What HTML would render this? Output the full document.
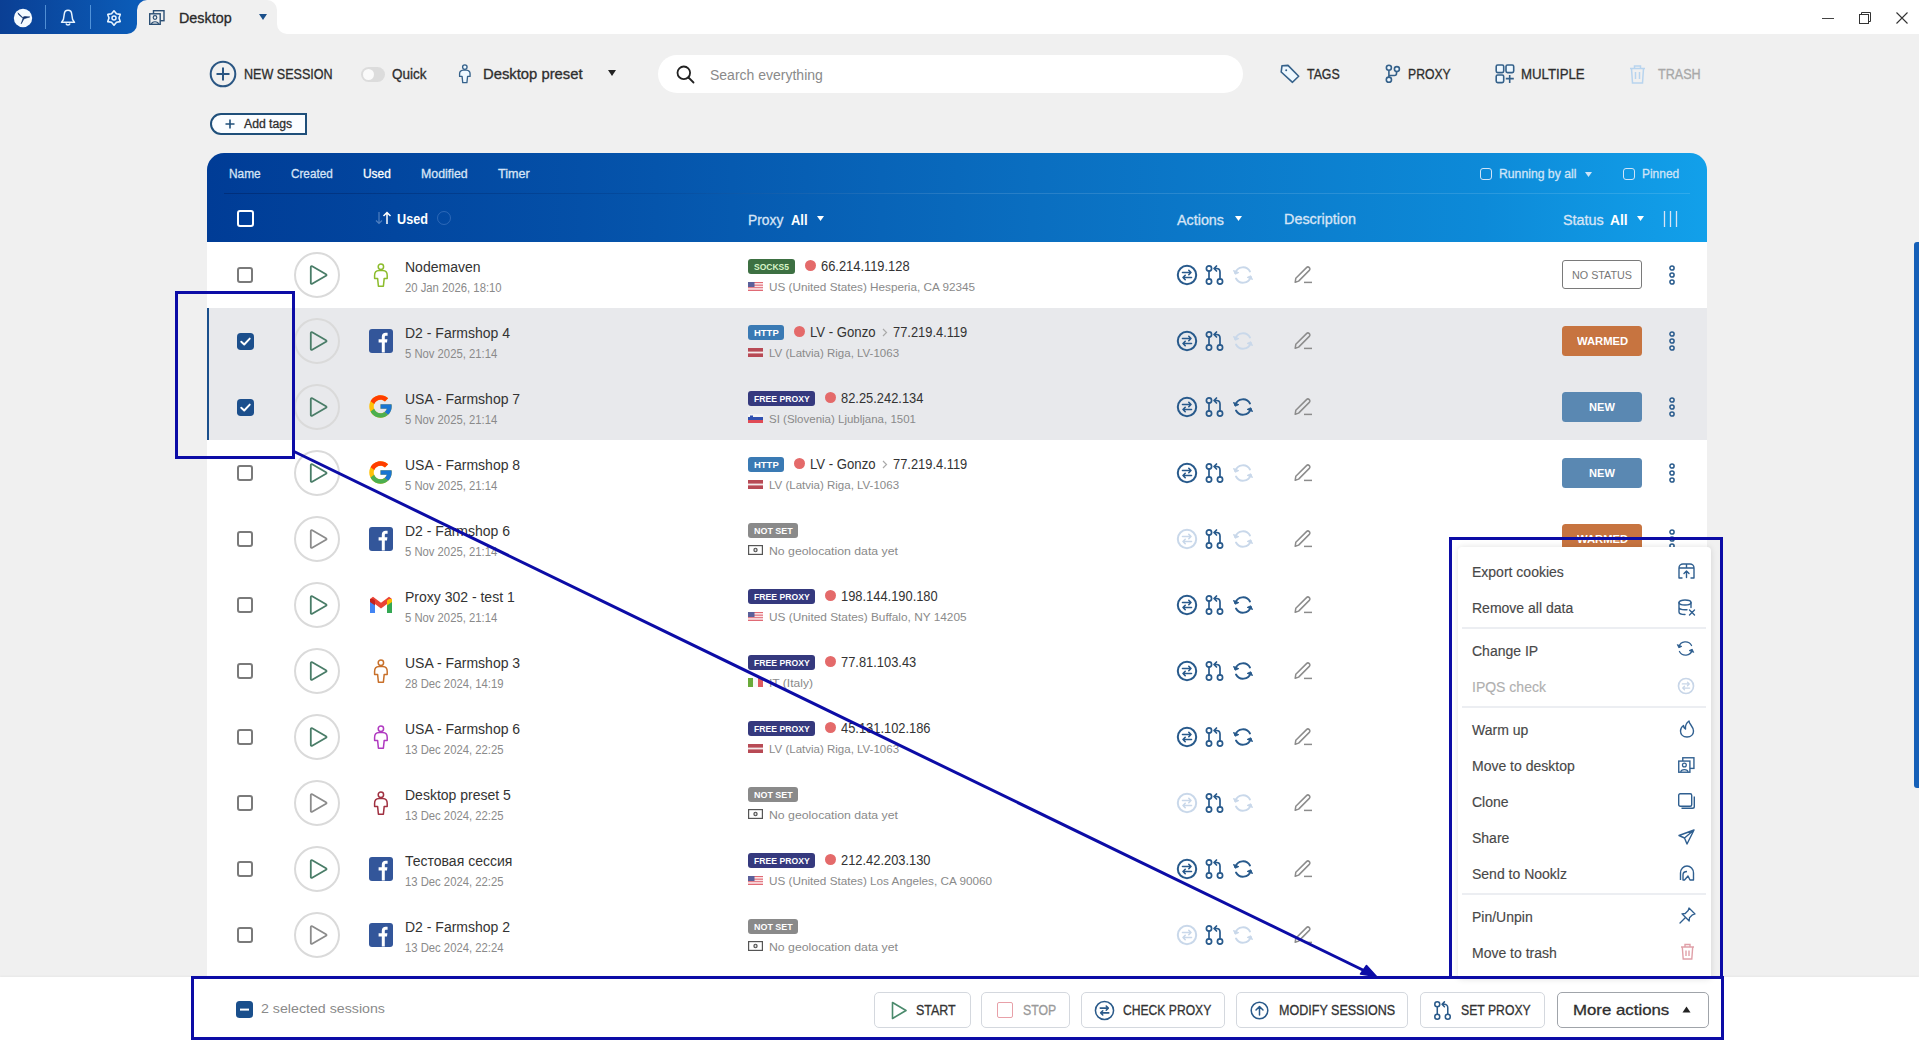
<!DOCTYPE html><html><head><meta charset="utf-8"><style>
*{box-sizing:border-box;margin:0;padding:0}
html,body{width:1919px;height:1041px;overflow:hidden}
body{background:#f0f0f0;font-family:"Liberation Sans",sans-serif;color:#333;position:relative}
.a{position:absolute}
.t{position:absolute;white-space:nowrap;line-height:1}
svg{position:absolute;overflow:visible}
</style></head><body><div class="a" style="left:0;top:0;width:1919px;height:34px;background:#fff"></div>
<div class="a" style="left:0;top:0;width:150px;height:20px;background:#0b5ab8"></div>
<div class="a" style="left:120px;top:14px;width:170px;height:20px;background:#f0f0f0"></div>
<div class="a" style="left:0;top:0;width:137px;height:34px;background:linear-gradient(90deg,#0a3f94,#0b5cb8);border-bottom-right-radius:10px"></div>
<div class="a" style="left:277px;top:0;width:1642px;height:34px;background:#fff;border-bottom-left-radius:10px"></div>
<div class="a" style="left:137px;top:0;width:140px;height:34px;background:#f0f0f0;border-radius:10px 10px 0 0"></div>
<svg style="left:13px;top:8px" width="20" height="20" viewBox="0 0 20 20"><circle cx="10" cy="10" r="9.2" fill="#f4faff"/><path d="M5 4.8 L5.8 6.8 L10 10.3 L8.2 15.8 L11 10.8 L16.8 8.9 L11.6 8.5 L9.6 9.4 Z" fill="#0d2f6a" stroke="#0d2f6a" stroke-width="0.6" stroke-linejoin="round"/></svg>
<div class="a" style="left:45px;top:5px;width:1px;height:24px;background:rgba(140,200,255,.55)"></div>
<div class="a" style="left:90px;top:5px;width:1px;height:24px;background:rgba(140,200,255,.55)"></div>
<svg style="left:60px;top:9px" width="16" height="17" viewBox="0 0 16 17"><path d="M4.3 5 C4.5 2.5 6 1.2 8 1.2 C10 1.2 11.5 2.5 11.7 5 L12.6 10.5 L14.5 13.3 H1.5 L3.4 10.5 Z M6 14.5 C6.3 15.6 7 16 8 16 C9 16 9.7 15.6 10 14.5" stroke="#e8f4ff" stroke-width="1.5" fill="none" stroke-linejoin="round"/></svg>
<svg style="left:104px;top:8px" width="20" height="20" viewBox="0 0 20 20"><path d="M10.00 2.80 L12.50 5.67 L16.24 6.40 L15.00 10.00 L16.24 13.60 L12.50 14.33 L10.00 17.20 L7.50 14.33 L3.76 13.60 L5.00 10.00 L3.76 6.40 L7.50 5.67 Z" stroke="#e8f4ff" stroke-width="1.6" fill="none" stroke-linejoin="round"/><circle cx="10" cy="10" r="2" stroke="#e8f4ff" stroke-width="1.5" fill="none"/></svg>
<svg style="left:149px;top:10px" width="16" height="15" viewBox="0 0 16 15"><rect x="4.5" y="0.7" width="10.5" height="10" stroke="#2b4f74" stroke-width="1.4" fill="none"/><rect x="0.7" y="3.8" width="10.5" height="10.5" stroke="#2b4f74" stroke-width="1.4" fill="#f0f0f0"/><circle cx="6" cy="7.5" r="1.8" stroke="#2b4f74" stroke-width="1.2" fill="none"/><path d="M2.5 14 C3 11 9 11 9.5 14" stroke="#2b4f74" stroke-width="1.2" fill="none"/></svg>
<div class="t" style="left:179px;top:11px;font-size:14px;color:#2a2a2a;-webkit-text-stroke:.3px #2a2a2a;transform:scaleX(1.0255);transform-origin:0 0;">Desktop</div>
<svg style="left:259px;top:14px" width="8" height="7" viewBox="0 0 8 7"><path d="M0 0 H8 L4 6 Z" fill="#1a4f8a"/></svg>
<div class="a" style="left:1822px;top:17.5px;width:12px;height:1.2px;background:#444"></div>
<svg style="left:1859px;top:12px" width="12" height="12" viewBox="0 0 12 12"><rect x="0.5" y="2.5" width="9" height="9" stroke="#333" fill="none"/><path d="M2.5 2.5 V0.5 H11.5 V9.5 H9.5" stroke="#333" fill="none"/></svg>
<svg style="left:1896px;top:12px" width="12" height="12" viewBox="0 0 12 12"><path d="M0.5 0.5 L11.5 11.5 M11.5 0.5 L0.5 11.5" stroke="#333" stroke-width="1.1"/></svg>
<svg style="left:209px;top:60px" width="28" height="28" viewBox="0 0 28 28"><circle cx="14" cy="14" r="12.3" stroke="#2a5683" stroke-width="2" fill="none"/><path d="M14 7.5 V20.5 M7.5 14 H20.5" stroke="#2a5683" stroke-width="2"/></svg>
<div class="t" style="left:244px;top:67px;font-size:14px;color:#2e2e2e;-webkit-text-stroke:.3px #2e2e2e;transform:scaleX(0.8977);transform-origin:0 0;">NEW SESSION</div>
<div class="a" style="left:361px;top:67px;width:24px;height:15px;border-radius:8px;background:#dcdcdc"></div>
<div class="a" style="left:363px;top:69px;width:11px;height:11px;border-radius:6px;background:#fafafa"></div>
<div class="t" style="left:392px;top:67px;font-size:14px;color:#2e2e2e;-webkit-text-stroke:.3px #2e2e2e;transform:scaleX(0.9647);transform-origin:0 0;">Quick</div>
<svg style="left:458px;top:63px" width="14" height="22" viewBox="0 0 16 25" ><g transform="translate(0.3,0.2) scale(0.95,0.92)"><circle cx="7.9" cy="4.8" r="2.7" stroke="#35618a" stroke-width="1.6" fill="#eef8ff"/><path d="M6 8.6 C3.5 8.8 1.6 10.6 1.6 13.2 V16.4 H4.6 L5.4 24.2 H10.4 L11.2 16.4 H14.2 V13.2 C14.2 10.6 12.3 8.8 9.8 8.6 Z" stroke="#35618a" stroke-width="1.6" fill="#eef8ff" stroke-linejoin="round"/></g></svg>
<div class="t" style="left:483px;top:67px;font-size:14px;color:#2e2e2e;-webkit-text-stroke:.3px #2e2e2e;transform:scaleX(1.0580);transform-origin:0 0;">Desktop preset</div>
<svg style="left:608px;top:70px" width="8" height="7" viewBox="0 0 8 7"><path d="M0 0 H8 L4 6 Z" fill="#222"/></svg>
<div class="a" style="left:658px;top:55px;width:585px;height:38px;border-radius:19px;background:#fff"></div>
<svg style="left:676px;top:65px" width="19" height="19" viewBox="0 0 19 19"><circle cx="7.8" cy="7.8" r="6.3" stroke="#222" stroke-width="1.8" fill="none"/><path d="M12.5 12.5 L17.5 17.5" stroke="#222" stroke-width="1.8" stroke-linecap="round"/></svg>
<div class="t" style="left:710px;top:68px;font-size:14px;color:#8a8a8a">Search everything</div>
<svg style="left:1280px;top:64px" width="20" height="20" viewBox="0 0 20 20"><path d="M1.2 8 L2 1.7 L8 1.4 L18.7 12.2 L12.5 18.3 Z" stroke="#35618a" stroke-width="1.6" fill="#eef8ff" stroke-linejoin="round"/><circle cx="6.2" cy="6.2" r="1" fill="#35618a"/></svg>
<div class="t" style="left:1307px;top:67px;font-size:14px;color:#2e2e2e;-webkit-text-stroke:.3px #2e2e2e;transform:scaleX(0.8824);transform-origin:0 0;">TAGS</div>
<svg style="left:1384px;top:63px" width="17" height="20" viewBox="0 0 17 20"><circle cx="4.9" cy="4.8" r="2.5" stroke="#35618a" stroke-width="1.6" fill="#eef8ff"/><circle cx="12.9" cy="6.1" r="2.5" stroke="#35618a" stroke-width="1.6" fill="#eef8ff"/><circle cx="4.9" cy="16.7" r="2.6" stroke="#35618a" stroke-width="1.6" fill="#eef8ff"/><path d="M4.9 7.3 V14.1 M12.5 8.6 V10.5 C12.5 11.8 11.8 12.5 10.5 12.5 H4.9" stroke="#35618a" stroke-width="1.6" fill="none"/></svg>
<div class="t" style="left:1408px;top:67px;font-size:14px;color:#2e2e2e;-webkit-text-stroke:.3px #2e2e2e;transform:scaleX(0.8722);transform-origin:0 0;">PROXY</div>
<svg style="left:1494px;top:63px" width="22" height="22" viewBox="0 0 22 22"><rect x="2.2" y="2" width="7.5" height="7.6" rx="1.5" stroke="#35618a" stroke-width="1.6" fill="#eef8ff"/><rect x="12" y="2" width="7.7" height="7.6" rx="1.5" stroke="#35618a" stroke-width="1.6" fill="#eef8ff"/><rect x="2.2" y="12" width="7.5" height="7.6" rx="1.5" stroke="#35618a" stroke-width="1.6" fill="#eef8ff"/><path d="M15.7 12 V20 M11.8 15.6 H19.8" stroke="#35618a" stroke-width="1.6"/></svg>
<div class="t" style="left:1521px;top:67px;font-size:14px;color:#2e2e2e;-webkit-text-stroke:.3px #2e2e2e;transform:scaleX(0.9442);transform-origin:0 0;">MULTIPLE</div>
<svg style="left:1629px;top:64px" width="17" height="20" viewBox="0 0 17 20"><path d="M1 4.5 H16 M5.5 4.5 V2 H11.5 V4.5 M2.5 4.5 L3.5 19 H13.5 L14.5 4.5 M6.5 8 V15 M10.5 8 V15" stroke="#b8d4ee" stroke-width="1.5" fill="none"/></svg>
<div class="t" style="left:1658px;top:67px;font-size:14px;color:#a8a8a8;-webkit-text-stroke:.3px #a8a8a8;transform:scaleX(0.9003);transform-origin:0 0;">TRASH</div>
<div class="a" style="left:210px;top:113px;width:97px;height:22px;border:2px solid #1f4f7a;border-radius:11px 0 0 11px;background:#fbfdff"></div>
<svg style="left:225px;top:119px" width="10" height="10" viewBox="0 0 10 10"><path d="M5 0.5 V9.5 M0.5 5 H9.5" stroke="#1f4f7a" stroke-width="1.6"/></svg>
<div class="t" style="left:244px;top:118px;font-size:12px;color:#2e2e2e;-webkit-text-stroke:.3px #2e2e2e;transform:scaleX(1.0168);transform-origin:0 0;">Add tags</div>
<div class="a" style="left:207px;top:153px;width:1500px;height:89px;border-radius:17px 17px 0 0;background:linear-gradient(90deg,#003c96 0%,#0450a8 25%,#0a6ec0 55%,#0d8ad8 85%,#12a0ea 100%)"></div>
<div class="a" style="left:224px;top:193px;width:1466px;height:1px;background:linear-gradient(90deg,rgba(0,30,90,.45),rgba(0,30,90,.15) 30%,rgba(255,255,255,.12) 50%,rgba(255,255,255,.12))"></div>
<div class="t" style="left:229px;top:168px;font-size:12.5px;color:#d6e4f6;-webkit-text-stroke:.3px #d6e4f6;transform:scaleX(0.9503);transform-origin:0 0;">Name</div>
<div class="t" style="left:291px;top:168px;font-size:12.5px;color:#d6e4f6;-webkit-text-stroke:.3px #d6e4f6;transform:scaleX(0.9375);transform-origin:0 0;">Created</div>
<div class="t" style="left:363px;top:168px;font-size:12.5px;color:#ffffff;-webkit-text-stroke:.3px #ffffff;transform:scaleX(0.9516);transform-origin:0 0;">Used</div>
<div class="t" style="left:421px;top:168px;font-size:12.5px;color:#d6e4f6;-webkit-text-stroke:.3px #d6e4f6;transform:scaleX(0.9884);transform-origin:0 0;">Modified</div>
<div class="t" style="left:498px;top:168px;font-size:12.5px;color:#d6e4f6;-webkit-text-stroke:.3px #d6e4f6;transform:scaleX(1.0063);transform-origin:0 0;">Timer</div>
<div class="a" style="left:1480px;top:168px;width:12px;height:12px;border:1.5px solid #cfe4f8;border-radius:3px"></div>
<div class="t" style="left:1499px;top:168px;font-size:12.5px;color:#cfe4f8;-webkit-text-stroke:.3px #cfe4f8;transform:scaleX(0.9767);transform-origin:0 0;">Running by all</div>
<svg style="left:1585px;top:172px" width="7" height="6" viewBox="0 0 7 6"><path d="M0 0 H7 L3.5 5 Z" fill="#cfe4f8"/></svg>
<div class="a" style="left:1623px;top:168px;width:12px;height:12px;border:1.5px solid #cfe4f8;border-radius:3px"></div>
<div class="t" style="left:1642px;top:168px;font-size:12.5px;color:#cfe4f8;-webkit-text-stroke:.3px #cfe4f8;transform:scaleX(0.9547);transform-origin:0 0;">Pinned</div>
<div class="a" style="left:237px;top:210px;width:17px;height:17px;border:2px solid #fff;border-radius:3px"></div>
<svg style="left:375px;top:211px" width="17" height="14" viewBox="0 0 17 14"><path d="M4 1 V12.5 M1 9.5 L4 12.5 L7 9.5" stroke="#4f7fc0" stroke-width="1.2" fill="none"/><path d="M12 13 V1.5 M8.5 5 L12 1.5 L15.5 5" stroke="#fff" stroke-width="1.5" fill="none"/></svg>
<div class="t" style="left:397px;top:212px;font-size:14px;color:#fff;font-weight:bold;transform:scaleX(0.9038);transform-origin:0 0;">Used</div>
<div class="a" style="left:437px;top:211px;width:14px;height:14px;border:1.5px solid rgba(120,160,220,.35);border-radius:50%"></div>
<div class="t" style="left:748px;top:213px;font-size:14px;color:#d6e4f6;-webkit-text-stroke:.3px #d6e4f6;transform:scaleX(0.9878);transform-origin:0 0;">Proxy</div>
<div class="t" style="left:791px;top:213px;font-size:14px;color:#fff;font-weight:bold;transform:scaleX(0.9263);transform-origin:0 0;">All</div>
<svg style="left:817px;top:216px" width="7" height="6" viewBox="0 0 7 6"><path d="M0 0 H7 L3.5 5 Z" fill="#fff"/></svg>
<div class="t" style="left:1177px;top:213px;font-size:14px;color:#d6e4f6;-webkit-text-stroke:.3px #d6e4f6;transform:scaleX(1.0234);transform-origin:0 0;">Actions</div>
<svg style="left:1235px;top:216px" width="7" height="6" viewBox="0 0 7 6"><path d="M0 0 H7 L3.5 5 Z" fill="#fff"/></svg>
<div class="t" style="left:1284px;top:212px;font-size:14px;color:#d6e4f6;-webkit-text-stroke:.3px #d6e4f6;transform:scaleX(1.0270);transform-origin:0 0;">Description</div>
<div class="t" style="left:1563px;top:213px;font-size:14px;color:#d6e4f6;-webkit-text-stroke:.3px #d6e4f6;transform:scaleX(1.0271);transform-origin:0 0;">Status</div>
<div class="t" style="left:1610px;top:213px;font-size:14px;color:#fff;font-weight:bold;transform:scaleX(0.9821);transform-origin:0 0;">All</div>
<svg style="left:1637px;top:216px" width="7" height="6" viewBox="0 0 7 6"><path d="M0 0 H7 L3.5 5 Z" fill="#fff"/></svg>
<svg style="left:1663px;top:211px" width="15" height="16" viewBox="0 0 15 16"><path d="M1.5 0 V16 M7.5 0 V16 M13.5 0 V16" stroke="#d6e4f6" stroke-width="1.3"/></svg>
<div class="a" style="left:207px;top:242px;width:1500px;height:735px;background:#fff"></div>
<div class="a" style="left:237px;top:267px;width:16px;height:16px;border:2px solid #7a7a7a;border-radius:3px"></div>
<div class="a" style="left:294px;top:252px;width:46px;height:46px;border:2px solid #dadada;border-radius:50%"></div>
<svg style="left:309px;top:264px" width="20" height="22" viewBox="0 0 20 22"><path d="M3.2 2.2 C2.4 1.8 1.8 2.2 1.8 3 V19 C1.8 19.8 2.4 20.2 3.2 19.8 L17 11.8 C17.7 11.4 17.7 10.6 17 10.2 Z" stroke="#4a7d68" stroke-width="1.8" fill="none" stroke-linejoin="round"/></svg>
<svg style="left:373px;top:262px" width="16" height="25" viewBox="0 0 16 25"><circle cx="7.9" cy="4.8" r="2.7" stroke="#8cbc2c" stroke-width="1.5" fill="none"/><path d="M6 8.6 C3.5 8.8 1.6 10.6 1.6 13.2 V16.4 H4.6 L5.4 24.2 H10.4 L11.2 16.4 H14.2 V13.2 C14.2 10.6 12.3 8.8 9.8 8.6 Z" stroke="#8cbc2c" stroke-width="1.5" fill="none" stroke-linejoin="round"/></svg>
<div class="t" style="left:405px;top:260px;font-size:14px;color:#333">Nodemaven</div>
<div class="t" style="left:405px;top:282px;font-size:12px;color:#8a8a8a;transform:scaleX(.94);transform-origin:0 0">20 Jan 2026, 18:10</div>
<div class="a" style="left:748px;top:259px;width:47px;height:15px;border-radius:3px;background:#3d7042"></div>
<div class="t" style="left:754.0px;top:262px;font-size:9.5px;color:#d8f5c8;font-weight:bold;transform:scaleX(0.8964);transform-origin:0 0;">SOCKS5</div>
<div class="a" style="left:805px;top:260px;width:11px;height:11px;border-radius:50%;background:#e46a6a"></div>
<div class="t" style="left:821px;top:259px;font-size:14px;color:#333;transform:scaleX(.92);transform-origin:0 0">66.214.119.128</div>
<svg style="left:748px;top:282px" width="15" height="9" viewBox="0 0 15 9"><rect x="0" y="0.00" width="15" height="1.29" fill="#e06a75"/><rect x="0" y="1.29" width="15" height="1.29" fill="#fbe3e6"/><rect x="0" y="2.57" width="15" height="1.29" fill="#e06a75"/><rect x="0" y="3.86" width="15" height="1.29" fill="#fbe3e6"/><rect x="0" y="5.14" width="15" height="1.29" fill="#e06a75"/><rect x="0" y="6.43" width="15" height="1.29" fill="#fbe3e6"/><rect x="0" y="7.71" width="15" height="1.29" fill="#e06a75"/><rect x="0" y="0" width="6.5" height="5" fill="#5a5f9a"/></svg>
<div class="t" style="left:769px;top:282px;font-size:11.5px;color:#8a8a8a;transform:scaleX(1.0201);transform-origin:0 0;">US (United States) Hesperia, CA 92345</div>
<svg style="left:1176px;top:264px" width="22" height="22" viewBox="0 0 22 22"><circle cx="11" cy="11" r="9.2" stroke="#285a8c" stroke-width="2" fill="none"/><path d="M6.5 8.5 H15 M12.8 6.3 L15 8.5 L12.8 10.7 M15.5 13.5 H7 M9.2 11.3 L7 13.5 L9.2 15.7" stroke="#285a8c" stroke-width="1.6" fill="none" stroke-linecap="round" stroke-linejoin="round"/></svg>
<svg style="left:1204px;top:264px" width="22" height="22" viewBox="0 0 22 22"><circle cx="5" cy="4.5" r="2.6" stroke="#285a8c" stroke-width="1.7" fill="none"/><circle cx="5" cy="17.5" r="2.6" stroke="#285a8c" stroke-width="1.7" fill="none"/><circle cx="16" cy="17.5" r="2.6" stroke="#285a8c" stroke-width="1.7" fill="none"/><path d="M5 7.1 V14.9 M16 14.9 V8 C16 6 14.5 4.5 12.5 4.5 H10.5 M12.5 2 L10 4.5 L12.5 7" stroke="#285a8c" stroke-width="1.7" fill="none" stroke-linecap="round" stroke-linejoin="round"/></svg>
<svg style="left:1232px;top:264px" width="22" height="22" viewBox="0 0 22 22"><path d="M3.3 9 A8 8 0 0 1 18 7.5 M18.7 13 A8 8 0 0 1 4 14.5" stroke="#c9d8ea" stroke-width="1.9" fill="none" stroke-linecap="round"/><path d="M1.5 6.5 L3.3 10.2 L6.8 8.6 Z M20.5 15.5 L18.7 11.8 L15.2 13.4 Z" fill="#c9d8ea" stroke="#c9d8ea" stroke-width="1" stroke-linejoin="round"/></svg>
<svg style="left:1294px;top:266px" width="19" height="18" viewBox="0 0 19 18"><path d="M1.2 16.2 L1.8 12.3 L12.5 1.6 C13.3 0.8 14.5 0.8 15.3 1.6 C16.1 2.4 16.1 3.6 15.3 4.4 L4.6 15.1 Z" stroke="#8c8c8c" stroke-width="1.5" fill="none" stroke-linejoin="round"/><path d="M10 16.4 H18" stroke="#8c8c8c" stroke-width="1.5"/></svg>
<div class="a" style="left:1562px;top:260px;width:80px;height:29px;border:1px solid #7a7a7a;border-radius:3px"></div>
<div class="t" style="left:1572px;top:269.5px;font-size:11px;color:#777;transform:scaleX(0.9793);transform-origin:0 0;">NO STATUS</div>
<svg style="left:1668px;top:264px" width="8" height="22" viewBox="0 0 8 22"><circle cx="4" cy="4" r="2.1" stroke="#285a8c" stroke-width="1.5" fill="none"/><circle cx="4" cy="11" r="2.1" stroke="#285a8c" stroke-width="1.5" fill="none"/><circle cx="4" cy="18" r="2.1" stroke="#285a8c" stroke-width="1.5" fill="none"/></svg>
<div class="a" style="left:207px;top:308px;width:1500px;height:66px;background:#e8e9ec"></div>
<svg style="left:237px;top:333px" width="17" height="17" viewBox="0 0 16 16"><rect width="16" height="16" rx="3.5" fill="#1c4f8c"/><path d="M4 8.2 L6.8 10.8 L12 5.3" stroke="#fff" stroke-width="1.8" fill="none" stroke-linecap="round" stroke-linejoin="round"/></svg>
<div class="a" style="left:294px;top:318px;width:46px;height:46px;border:2px solid #dadada;border-radius:50%"></div>
<svg style="left:309px;top:330px" width="20" height="22" viewBox="0 0 20 22"><path d="M3.2 2.2 C2.4 1.8 1.8 2.2 1.8 3 V19 C1.8 19.8 2.4 20.2 3.2 19.8 L17 11.8 C17.7 11.4 17.7 10.6 17 10.2 Z" stroke="#4a7d68" stroke-width="1.8" fill="none" stroke-linejoin="round"/></svg>
<svg style="left:369px;top:329px" width="24" height="24" viewBox="0 0 24 24"><rect x="0" y="0" width="24" height="24" rx="3" fill="#33569a"/><path d="M12.8 23.5 V13.5 H9.6 V10.2 H12.8 V7.8 C12.8 5 14.3 3.8 16.8 3.8 C17.7 3.8 18.6 3.9 18.6 3.9 V6.8 H17.3 C16 6.8 15.8 7.4 15.8 8.2 V10.2 H18.4 L18 13.5 H15.8 V23.5 Z" fill="#fff"/></svg>
<div class="t" style="left:405px;top:326px;font-size:14px;color:#333">D2 - Farmshop 4</div>
<div class="t" style="left:405px;top:348px;font-size:12px;color:#8a8a8a;transform:scaleX(.94);transform-origin:0 0">5 Nov 2025, 21:14</div>
<div class="a" style="left:748px;top:325px;width:36px;height:15px;border-radius:3px;background:#3a7ab4"></div>
<div class="t" style="left:753.6px;top:328px;font-size:9.5px;color:#ffffff;font-weight:bold;transform:scaleX(0.9962);transform-origin:0 0;">HTTP</div>
<div class="a" style="left:794px;top:326px;width:11px;height:11px;border-radius:50%;background:#e46a6a"></div>
<div class="t" style="left:810px;top:325px;font-size:14px;color:#333;transform:scaleX(.94);transform-origin:0 0">LV - Gonzo</div>
<svg style="left:882px;top:328px" width="6" height="9" viewBox="0 0 6 9"><path d="M1 1 L4.5 4.5 L1 8" stroke="#aaa" stroke-width="1.2" fill="none"/></svg>
<div class="t" style="left:893px;top:325px;font-size:14px;color:#333;transform:scaleX(.92);transform-origin:0 0">77.219.4.119</div>
<svg style="left:748px;top:348px" width="15" height="9" viewBox="0 0 15 9"><rect width="15" height="9" fill="#b84a55"/><rect y="3.6" width="15" height="1.8" fill="#f4eaea"/></svg>
<div class="t" style="left:769px;top:348px;font-size:11.5px;color:#8a8a8a;transform:scaleX(1.0004);transform-origin:0 0;">LV (Latvia) Riga, LV-1063</div>
<svg style="left:1176px;top:330px" width="22" height="22" viewBox="0 0 22 22"><circle cx="11" cy="11" r="9.2" stroke="#285a8c" stroke-width="2" fill="none"/><path d="M6.5 8.5 H15 M12.8 6.3 L15 8.5 L12.8 10.7 M15.5 13.5 H7 M9.2 11.3 L7 13.5 L9.2 15.7" stroke="#285a8c" stroke-width="1.6" fill="none" stroke-linecap="round" stroke-linejoin="round"/></svg>
<svg style="left:1204px;top:330px" width="22" height="22" viewBox="0 0 22 22"><circle cx="5" cy="4.5" r="2.6" stroke="#285a8c" stroke-width="1.7" fill="none"/><circle cx="5" cy="17.5" r="2.6" stroke="#285a8c" stroke-width="1.7" fill="none"/><circle cx="16" cy="17.5" r="2.6" stroke="#285a8c" stroke-width="1.7" fill="none"/><path d="M5 7.1 V14.9 M16 14.9 V8 C16 6 14.5 4.5 12.5 4.5 H10.5 M12.5 2 L10 4.5 L12.5 7" stroke="#285a8c" stroke-width="1.7" fill="none" stroke-linecap="round" stroke-linejoin="round"/></svg>
<svg style="left:1232px;top:330px" width="22" height="22" viewBox="0 0 22 22"><path d="M3.3 9 A8 8 0 0 1 18 7.5 M18.7 13 A8 8 0 0 1 4 14.5" stroke="#c9d8ea" stroke-width="1.9" fill="none" stroke-linecap="round"/><path d="M1.5 6.5 L3.3 10.2 L6.8 8.6 Z M20.5 15.5 L18.7 11.8 L15.2 13.4 Z" fill="#c9d8ea" stroke="#c9d8ea" stroke-width="1" stroke-linejoin="round"/></svg>
<svg style="left:1294px;top:332px" width="19" height="18" viewBox="0 0 19 18"><path d="M1.2 16.2 L1.8 12.3 L12.5 1.6 C13.3 0.8 14.5 0.8 15.3 1.6 C16.1 2.4 16.1 3.6 15.3 4.4 L4.6 15.1 Z" stroke="#8c8c8c" stroke-width="1.5" fill="none" stroke-linejoin="round"/><path d="M10 16.4 H18" stroke="#8c8c8c" stroke-width="1.5"/></svg>
<div class="a" style="left:1562px;top:326px;width:80px;height:29.5px;border-radius:3.5px;background:#c77440"></div>
<div class="t" style="left:1576.7px;top:335.5px;font-size:11px;color:#fff;font-weight:bold;transform:scaleX(1.0227);transform-origin:0 0;">WARMED</div>
<svg style="left:1668px;top:330px" width="8" height="22" viewBox="0 0 8 22"><circle cx="4" cy="4" r="2.1" stroke="#285a8c" stroke-width="1.5" fill="none"/><circle cx="4" cy="11" r="2.1" stroke="#285a8c" stroke-width="1.5" fill="none"/><circle cx="4" cy="18" r="2.1" stroke="#285a8c" stroke-width="1.5" fill="none"/></svg>
<div class="a" style="left:207px;top:374px;width:1500px;height:66px;background:#e8e9ec"></div>
<svg style="left:237px;top:399px" width="17" height="17" viewBox="0 0 16 16"><rect width="16" height="16" rx="3.5" fill="#1c4f8c"/><path d="M4 8.2 L6.8 10.8 L12 5.3" stroke="#fff" stroke-width="1.8" fill="none" stroke-linecap="round" stroke-linejoin="round"/></svg>
<div class="a" style="left:294px;top:384px;width:46px;height:46px;border:2px solid #dadada;border-radius:50%"></div>
<svg style="left:309px;top:396px" width="20" height="22" viewBox="0 0 20 22"><path d="M3.2 2.2 C2.4 1.8 1.8 2.2 1.8 3 V19 C1.8 19.8 2.4 20.2 3.2 19.8 L17 11.8 C17.7 11.4 17.7 10.6 17 10.2 Z" stroke="#4a7d68" stroke-width="1.8" fill="none" stroke-linejoin="round"/></svg>
<svg style="left:367px;top:393px" width="27" height="27" viewBox="0 0 48 48"><path fill="#FFC107" d="M43.6 20.1H42V20H24v8h11.3C33.7 32.7 29.2 36 24 36c-6.6 0-12-5.4-12-12s5.4-12 12-12c3.1 0 5.8 1.2 7.9 3.1l5.7-5.7C34 6.1 29.3 4 24 4 13 4 4 13 4 24s9 20 20 20 20-9 20-20c0-1.3-.1-2.6-.4-3.9z"/><path fill="#FF3D00" d="M6.3 14.7l6.6 4.8C14.7 15.1 19 12 24 12c3.1 0 5.8 1.2 7.9 3.1l5.7-5.7C34 6.1 29.3 4 24 4 16.3 4 9.7 8.3 6.3 14.7z"/><path fill="#4CAF50" d="M24 44c5.2 0 9.9-2 13.4-5.2l-6.2-5.2C29.2 35.1 26.7 36 24 36c-5.2 0-9.6-3.3-11.3-8l-6.5 5C9.5 39.6 16.2 44 24 44z"/><path fill="#1976D2" d="M43.6 20.1H42V20H24v8h11.3c-.8 2.2-2.2 4.2-4.1 5.6l6.2 5.2C37 39.2 44 34 44 24c0-1.3-.1-2.6-.4-3.9z"/></svg>
<div class="t" style="left:405px;top:392px;font-size:14px;color:#333">USA - Farmshop 7</div>
<div class="t" style="left:405px;top:414px;font-size:12px;color:#8a8a8a;transform:scaleX(.94);transform-origin:0 0">5 Nov 2025, 21:14</div>
<div class="a" style="left:748px;top:391px;width:67px;height:15px;border-radius:3px;background:#35397e"></div>
<div class="t" style="left:753.6px;top:394px;font-size:9.5px;color:#ffffff;font-weight:bold;transform:scaleX(0.9090);transform-origin:0 0;">FREE PROXY</div>
<div class="a" style="left:825px;top:392px;width:11px;height:11px;border-radius:50%;background:#e46a6a"></div>
<div class="t" style="left:841px;top:391px;font-size:14px;color:#333;transform:scaleX(.92);transform-origin:0 0">82.25.242.134</div>
<svg style="left:748px;top:414px" width="15" height="9" viewBox="0 0 15 9"><rect width="15" height="3" fill="#f4f4f4"/><rect y="3" width="15" height="3" fill="#3050b0"/><rect y="6" width="15" height="3" fill="#e04a55"/><rect x="2" y="1.5" width="3" height="3.5" fill="#3050b0"/></svg>
<div class="t" style="left:769px;top:414px;font-size:11.5px;color:#8a8a8a;transform:scaleX(0.9994);transform-origin:0 0;">SI (Slovenia) Ljubljana, 1501</div>
<svg style="left:1176px;top:396px" width="22" height="22" viewBox="0 0 22 22"><circle cx="11" cy="11" r="9.2" stroke="#285a8c" stroke-width="2" fill="none"/><path d="M6.5 8.5 H15 M12.8 6.3 L15 8.5 L12.8 10.7 M15.5 13.5 H7 M9.2 11.3 L7 13.5 L9.2 15.7" stroke="#285a8c" stroke-width="1.6" fill="none" stroke-linecap="round" stroke-linejoin="round"/></svg>
<svg style="left:1204px;top:396px" width="22" height="22" viewBox="0 0 22 22"><circle cx="5" cy="4.5" r="2.6" stroke="#285a8c" stroke-width="1.7" fill="none"/><circle cx="5" cy="17.5" r="2.6" stroke="#285a8c" stroke-width="1.7" fill="none"/><circle cx="16" cy="17.5" r="2.6" stroke="#285a8c" stroke-width="1.7" fill="none"/><path d="M5 7.1 V14.9 M16 14.9 V8 C16 6 14.5 4.5 12.5 4.5 H10.5 M12.5 2 L10 4.5 L12.5 7" stroke="#285a8c" stroke-width="1.7" fill="none" stroke-linecap="round" stroke-linejoin="round"/></svg>
<svg style="left:1232px;top:396px" width="22" height="22" viewBox="0 0 22 22"><path d="M3.3 9 A8 8 0 0 1 18 7.5 M18.7 13 A8 8 0 0 1 4 14.5" stroke="#285a8c" stroke-width="1.9" fill="none" stroke-linecap="round"/><path d="M1.5 6.5 L3.3 10.2 L6.8 8.6 Z M20.5 15.5 L18.7 11.8 L15.2 13.4 Z" fill="#285a8c" stroke="#285a8c" stroke-width="1" stroke-linejoin="round"/></svg>
<svg style="left:1294px;top:398px" width="19" height="18" viewBox="0 0 19 18"><path d="M1.2 16.2 L1.8 12.3 L12.5 1.6 C13.3 0.8 14.5 0.8 15.3 1.6 C16.1 2.4 16.1 3.6 15.3 4.4 L4.6 15.1 Z" stroke="#8c8c8c" stroke-width="1.5" fill="none" stroke-linejoin="round"/><path d="M10 16.4 H18" stroke="#8c8c8c" stroke-width="1.5"/></svg>
<div class="a" style="left:1562px;top:392px;width:80px;height:29.5px;border-radius:3.5px;background:#5a88b2"></div>
<div class="t" style="left:1588.8px;top:401.5px;font-size:11px;color:#fff;font-weight:bold;transform:scaleX(1.0062);transform-origin:0 0;">NEW</div>
<svg style="left:1668px;top:396px" width="8" height="22" viewBox="0 0 8 22"><circle cx="4" cy="4" r="2.1" stroke="#285a8c" stroke-width="1.5" fill="none"/><circle cx="4" cy="11" r="2.1" stroke="#285a8c" stroke-width="1.5" fill="none"/><circle cx="4" cy="18" r="2.1" stroke="#285a8c" stroke-width="1.5" fill="none"/></svg>
<div class="a" style="left:237px;top:465px;width:16px;height:16px;border:2px solid #7a7a7a;border-radius:3px"></div>
<div class="a" style="left:294px;top:450px;width:46px;height:46px;border:2px solid #dadada;border-radius:50%"></div>
<svg style="left:309px;top:462px" width="20" height="22" viewBox="0 0 20 22"><path d="M3.2 2.2 C2.4 1.8 1.8 2.2 1.8 3 V19 C1.8 19.8 2.4 20.2 3.2 19.8 L17 11.8 C17.7 11.4 17.7 10.6 17 10.2 Z" stroke="#4a7d68" stroke-width="1.8" fill="none" stroke-linejoin="round"/></svg>
<svg style="left:367px;top:459px" width="27" height="27" viewBox="0 0 48 48"><path fill="#FFC107" d="M43.6 20.1H42V20H24v8h11.3C33.7 32.7 29.2 36 24 36c-6.6 0-12-5.4-12-12s5.4-12 12-12c3.1 0 5.8 1.2 7.9 3.1l5.7-5.7C34 6.1 29.3 4 24 4 13 4 4 13 4 24s9 20 20 20 20-9 20-20c0-1.3-.1-2.6-.4-3.9z"/><path fill="#FF3D00" d="M6.3 14.7l6.6 4.8C14.7 15.1 19 12 24 12c3.1 0 5.8 1.2 7.9 3.1l5.7-5.7C34 6.1 29.3 4 24 4 16.3 4 9.7 8.3 6.3 14.7z"/><path fill="#4CAF50" d="M24 44c5.2 0 9.9-2 13.4-5.2l-6.2-5.2C29.2 35.1 26.7 36 24 36c-5.2 0-9.6-3.3-11.3-8l-6.5 5C9.5 39.6 16.2 44 24 44z"/><path fill="#1976D2" d="M43.6 20.1H42V20H24v8h11.3c-.8 2.2-2.2 4.2-4.1 5.6l6.2 5.2C37 39.2 44 34 44 24c0-1.3-.1-2.6-.4-3.9z"/></svg>
<div class="t" style="left:405px;top:458px;font-size:14px;color:#333">USA - Farmshop 8</div>
<div class="t" style="left:405px;top:480px;font-size:12px;color:#8a8a8a;transform:scaleX(.94);transform-origin:0 0">5 Nov 2025, 21:14</div>
<div class="a" style="left:748px;top:457px;width:36px;height:15px;border-radius:3px;background:#3a7ab4"></div>
<div class="t" style="left:753.6px;top:460px;font-size:9.5px;color:#ffffff;font-weight:bold;transform:scaleX(0.9962);transform-origin:0 0;">HTTP</div>
<div class="a" style="left:794px;top:458px;width:11px;height:11px;border-radius:50%;background:#e46a6a"></div>
<div class="t" style="left:810px;top:457px;font-size:14px;color:#333;transform:scaleX(.94);transform-origin:0 0">LV - Gonzo</div>
<svg style="left:882px;top:460px" width="6" height="9" viewBox="0 0 6 9"><path d="M1 1 L4.5 4.5 L1 8" stroke="#aaa" stroke-width="1.2" fill="none"/></svg>
<div class="t" style="left:893px;top:457px;font-size:14px;color:#333;transform:scaleX(.92);transform-origin:0 0">77.219.4.119</div>
<svg style="left:748px;top:480px" width="15" height="9" viewBox="0 0 15 9"><rect width="15" height="9" fill="#b84a55"/><rect y="3.6" width="15" height="1.8" fill="#f4eaea"/></svg>
<div class="t" style="left:769px;top:480px;font-size:11.5px;color:#8a8a8a;transform:scaleX(1.0004);transform-origin:0 0;">LV (Latvia) Riga, LV-1063</div>
<svg style="left:1176px;top:462px" width="22" height="22" viewBox="0 0 22 22"><circle cx="11" cy="11" r="9.2" stroke="#285a8c" stroke-width="2" fill="none"/><path d="M6.5 8.5 H15 M12.8 6.3 L15 8.5 L12.8 10.7 M15.5 13.5 H7 M9.2 11.3 L7 13.5 L9.2 15.7" stroke="#285a8c" stroke-width="1.6" fill="none" stroke-linecap="round" stroke-linejoin="round"/></svg>
<svg style="left:1204px;top:462px" width="22" height="22" viewBox="0 0 22 22"><circle cx="5" cy="4.5" r="2.6" stroke="#285a8c" stroke-width="1.7" fill="none"/><circle cx="5" cy="17.5" r="2.6" stroke="#285a8c" stroke-width="1.7" fill="none"/><circle cx="16" cy="17.5" r="2.6" stroke="#285a8c" stroke-width="1.7" fill="none"/><path d="M5 7.1 V14.9 M16 14.9 V8 C16 6 14.5 4.5 12.5 4.5 H10.5 M12.5 2 L10 4.5 L12.5 7" stroke="#285a8c" stroke-width="1.7" fill="none" stroke-linecap="round" stroke-linejoin="round"/></svg>
<svg style="left:1232px;top:462px" width="22" height="22" viewBox="0 0 22 22"><path d="M3.3 9 A8 8 0 0 1 18 7.5 M18.7 13 A8 8 0 0 1 4 14.5" stroke="#c9d8ea" stroke-width="1.9" fill="none" stroke-linecap="round"/><path d="M1.5 6.5 L3.3 10.2 L6.8 8.6 Z M20.5 15.5 L18.7 11.8 L15.2 13.4 Z" fill="#c9d8ea" stroke="#c9d8ea" stroke-width="1" stroke-linejoin="round"/></svg>
<svg style="left:1294px;top:464px" width="19" height="18" viewBox="0 0 19 18"><path d="M1.2 16.2 L1.8 12.3 L12.5 1.6 C13.3 0.8 14.5 0.8 15.3 1.6 C16.1 2.4 16.1 3.6 15.3 4.4 L4.6 15.1 Z" stroke="#8c8c8c" stroke-width="1.5" fill="none" stroke-linejoin="round"/><path d="M10 16.4 H18" stroke="#8c8c8c" stroke-width="1.5"/></svg>
<div class="a" style="left:1562px;top:458px;width:80px;height:29.5px;border-radius:3.5px;background:#5a88b2"></div>
<div class="t" style="left:1588.8px;top:467.5px;font-size:11px;color:#fff;font-weight:bold;transform:scaleX(1.0062);transform-origin:0 0;">NEW</div>
<svg style="left:1668px;top:462px" width="8" height="22" viewBox="0 0 8 22"><circle cx="4" cy="4" r="2.1" stroke="#285a8c" stroke-width="1.5" fill="none"/><circle cx="4" cy="11" r="2.1" stroke="#285a8c" stroke-width="1.5" fill="none"/><circle cx="4" cy="18" r="2.1" stroke="#285a8c" stroke-width="1.5" fill="none"/></svg>
<div class="a" style="left:237px;top:531px;width:16px;height:16px;border:2px solid #7a7a7a;border-radius:3px"></div>
<div class="a" style="left:294px;top:516px;width:46px;height:46px;border:2px solid #dadada;border-radius:50%"></div>
<svg style="left:309px;top:528px" width="20" height="22" viewBox="0 0 20 22"><path d="M3.2 2.2 C2.4 1.8 1.8 2.2 1.8 3 V19 C1.8 19.8 2.4 20.2 3.2 19.8 L17 11.8 C17.7 11.4 17.7 10.6 17 10.2 Z" stroke="#8c8c8c" stroke-width="1.8" fill="none" stroke-linejoin="round"/></svg>
<svg style="left:369px;top:527px" width="24" height="24" viewBox="0 0 24 24"><rect x="0" y="0" width="24" height="24" rx="3" fill="#33569a"/><path d="M12.8 23.5 V13.5 H9.6 V10.2 H12.8 V7.8 C12.8 5 14.3 3.8 16.8 3.8 C17.7 3.8 18.6 3.9 18.6 3.9 V6.8 H17.3 C16 6.8 15.8 7.4 15.8 8.2 V10.2 H18.4 L18 13.5 H15.8 V23.5 Z" fill="#fff"/></svg>
<div class="t" style="left:405px;top:524px;font-size:14px;color:#333">D2 - Farmshop 6</div>
<div class="t" style="left:405px;top:546px;font-size:12px;color:#8a8a8a;transform:scaleX(.94);transform-origin:0 0">5 Nov 2025, 21:14</div>
<div class="a" style="left:748px;top:523px;width:50px;height:15px;border-radius:3px;background:#8a8a8a"></div>
<div class="t" style="left:753.6px;top:526px;font-size:9.5px;color:#ffffff;font-weight:bold;transform:scaleX(0.9408);transform-origin:0 0;">NOT SET</div>
<svg style="left:748px;top:545px" width="15" height="10" viewBox="0 0 15 10"><rect x="0.6" y="0.6" width="13.8" height="8.8" stroke="#555" stroke-width="1.2" fill="none"/><circle cx="7.5" cy="5" r="2.2" fill="#555"/><path d="M7.5 3.8 V6.2 M6.3 5 H8.7" stroke="#fff" stroke-width=".7"/></svg>
<div class="t" style="left:769px;top:546px;font-size:11.5px;color:#8a8a8a;transform:scaleX(1.0673);transform-origin:0 0;">No geolocation data yet</div>
<svg style="left:1176px;top:528px" width="22" height="22" viewBox="0 0 22 22"><circle cx="11" cy="11" r="9.2" stroke="#c9d8ea" stroke-width="2" fill="none"/><path d="M6.5 8.5 H15 M12.8 6.3 L15 8.5 L12.8 10.7 M15.5 13.5 H7 M9.2 11.3 L7 13.5 L9.2 15.7" stroke="#c9d8ea" stroke-width="1.6" fill="none" stroke-linecap="round" stroke-linejoin="round"/></svg>
<svg style="left:1204px;top:528px" width="22" height="22" viewBox="0 0 22 22"><circle cx="5" cy="4.5" r="2.6" stroke="#285a8c" stroke-width="1.7" fill="none"/><circle cx="5" cy="17.5" r="2.6" stroke="#285a8c" stroke-width="1.7" fill="none"/><circle cx="16" cy="17.5" r="2.6" stroke="#285a8c" stroke-width="1.7" fill="none"/><path d="M5 7.1 V14.9 M16 14.9 V8 C16 6 14.5 4.5 12.5 4.5 H10.5 M12.5 2 L10 4.5 L12.5 7" stroke="#285a8c" stroke-width="1.7" fill="none" stroke-linecap="round" stroke-linejoin="round"/></svg>
<svg style="left:1232px;top:528px" width="22" height="22" viewBox="0 0 22 22"><path d="M3.3 9 A8 8 0 0 1 18 7.5 M18.7 13 A8 8 0 0 1 4 14.5" stroke="#c9d8ea" stroke-width="1.9" fill="none" stroke-linecap="round"/><path d="M1.5 6.5 L3.3 10.2 L6.8 8.6 Z M20.5 15.5 L18.7 11.8 L15.2 13.4 Z" fill="#c9d8ea" stroke="#c9d8ea" stroke-width="1" stroke-linejoin="round"/></svg>
<svg style="left:1294px;top:530px" width="19" height="18" viewBox="0 0 19 18"><path d="M1.2 16.2 L1.8 12.3 L12.5 1.6 C13.3 0.8 14.5 0.8 15.3 1.6 C16.1 2.4 16.1 3.6 15.3 4.4 L4.6 15.1 Z" stroke="#8c8c8c" stroke-width="1.5" fill="none" stroke-linejoin="round"/><path d="M10 16.4 H18" stroke="#8c8c8c" stroke-width="1.5"/></svg>
<div class="a" style="left:1562px;top:524px;width:80px;height:29.5px;border-radius:3.5px;background:#c77440"></div>
<div class="t" style="left:1576.7px;top:533.5px;font-size:11px;color:#fff;font-weight:bold;transform:scaleX(1.0227);transform-origin:0 0;">WARMED</div>
<svg style="left:1668px;top:528px" width="8" height="22" viewBox="0 0 8 22"><circle cx="4" cy="4" r="2.1" stroke="#285a8c" stroke-width="1.5" fill="none"/><circle cx="4" cy="11" r="2.1" stroke="#285a8c" stroke-width="1.5" fill="none"/><circle cx="4" cy="18" r="2.1" stroke="#285a8c" stroke-width="1.5" fill="none"/></svg>
<div class="a" style="left:237px;top:597px;width:16px;height:16px;border:2px solid #7a7a7a;border-radius:3px"></div>
<div class="a" style="left:294px;top:582px;width:46px;height:46px;border:2px solid #dadada;border-radius:50%"></div>
<svg style="left:309px;top:594px" width="20" height="22" viewBox="0 0 20 22"><path d="M3.2 2.2 C2.4 1.8 1.8 2.2 1.8 3 V19 C1.8 19.8 2.4 20.2 3.2 19.8 L17 11.8 C17.7 11.4 17.7 10.6 17 10.2 Z" stroke="#4a7d68" stroke-width="1.8" fill="none" stroke-linejoin="round"/></svg>
<svg style="left:370px;top:596px" width="22" height="17" viewBox="0 0 22 17"><path d="M0 3 L0 17 H5 V8 L11 12.5 L17 8 V17 H22 V3 L19 0.8 L11 6.8 L3 0.8 Z" fill="#ea4335"/><path d="M0 3 V17 H5 V7 Z" fill="#4285f4"/><path d="M17 7 V17 H22 V3 Z" fill="#34a853"/><path d="M22 3 V6 L17 9.5 V4.5 L19 3 Z" fill="#fbbc04"/><path d="M0 3 V6 L5 9.5 V4.5 L3 3 Z" fill="#c5221f"/></svg>
<div class="t" style="left:405px;top:590px;font-size:14px;color:#333">Proxy 302 - test 1</div>
<div class="t" style="left:405px;top:612px;font-size:12px;color:#8a8a8a;transform:scaleX(.94);transform-origin:0 0">5 Nov 2025, 21:14</div>
<div class="a" style="left:748px;top:589px;width:67px;height:15px;border-radius:3px;background:#35397e"></div>
<div class="t" style="left:753.6px;top:592px;font-size:9.5px;color:#ffffff;font-weight:bold;transform:scaleX(0.9090);transform-origin:0 0;">FREE PROXY</div>
<div class="a" style="left:825px;top:590px;width:11px;height:11px;border-radius:50%;background:#e46a6a"></div>
<div class="t" style="left:841px;top:589px;font-size:14px;color:#333;transform:scaleX(.92);transform-origin:0 0">198.144.190.180</div>
<svg style="left:748px;top:612px" width="15" height="9" viewBox="0 0 15 9"><rect x="0" y="0.00" width="15" height="1.29" fill="#e06a75"/><rect x="0" y="1.29" width="15" height="1.29" fill="#fbe3e6"/><rect x="0" y="2.57" width="15" height="1.29" fill="#e06a75"/><rect x="0" y="3.86" width="15" height="1.29" fill="#fbe3e6"/><rect x="0" y="5.14" width="15" height="1.29" fill="#e06a75"/><rect x="0" y="6.43" width="15" height="1.29" fill="#fbe3e6"/><rect x="0" y="7.71" width="15" height="1.29" fill="#e06a75"/><rect x="0" y="0" width="6.5" height="5" fill="#5a5f9a"/></svg>
<div class="t" style="left:769px;top:612px;font-size:11.5px;color:#8a8a8a;transform:scaleX(1.0290);transform-origin:0 0;">US (United States) Buffalo, NY 14205</div>
<svg style="left:1176px;top:594px" width="22" height="22" viewBox="0 0 22 22"><circle cx="11" cy="11" r="9.2" stroke="#285a8c" stroke-width="2" fill="none"/><path d="M6.5 8.5 H15 M12.8 6.3 L15 8.5 L12.8 10.7 M15.5 13.5 H7 M9.2 11.3 L7 13.5 L9.2 15.7" stroke="#285a8c" stroke-width="1.6" fill="none" stroke-linecap="round" stroke-linejoin="round"/></svg>
<svg style="left:1204px;top:594px" width="22" height="22" viewBox="0 0 22 22"><circle cx="5" cy="4.5" r="2.6" stroke="#285a8c" stroke-width="1.7" fill="none"/><circle cx="5" cy="17.5" r="2.6" stroke="#285a8c" stroke-width="1.7" fill="none"/><circle cx="16" cy="17.5" r="2.6" stroke="#285a8c" stroke-width="1.7" fill="none"/><path d="M5 7.1 V14.9 M16 14.9 V8 C16 6 14.5 4.5 12.5 4.5 H10.5 M12.5 2 L10 4.5 L12.5 7" stroke="#285a8c" stroke-width="1.7" fill="none" stroke-linecap="round" stroke-linejoin="round"/></svg>
<svg style="left:1232px;top:594px" width="22" height="22" viewBox="0 0 22 22"><path d="M3.3 9 A8 8 0 0 1 18 7.5 M18.7 13 A8 8 0 0 1 4 14.5" stroke="#285a8c" stroke-width="1.9" fill="none" stroke-linecap="round"/><path d="M1.5 6.5 L3.3 10.2 L6.8 8.6 Z M20.5 15.5 L18.7 11.8 L15.2 13.4 Z" fill="#285a8c" stroke="#285a8c" stroke-width="1" stroke-linejoin="round"/></svg>
<svg style="left:1294px;top:596px" width="19" height="18" viewBox="0 0 19 18"><path d="M1.2 16.2 L1.8 12.3 L12.5 1.6 C13.3 0.8 14.5 0.8 15.3 1.6 C16.1 2.4 16.1 3.6 15.3 4.4 L4.6 15.1 Z" stroke="#8c8c8c" stroke-width="1.5" fill="none" stroke-linejoin="round"/><path d="M10 16.4 H18" stroke="#8c8c8c" stroke-width="1.5"/></svg>
<div class="a" style="left:237px;top:663px;width:16px;height:16px;border:2px solid #7a7a7a;border-radius:3px"></div>
<div class="a" style="left:294px;top:648px;width:46px;height:46px;border:2px solid #dadada;border-radius:50%"></div>
<svg style="left:309px;top:660px" width="20" height="22" viewBox="0 0 20 22"><path d="M3.2 2.2 C2.4 1.8 1.8 2.2 1.8 3 V19 C1.8 19.8 2.4 20.2 3.2 19.8 L17 11.8 C17.7 11.4 17.7 10.6 17 10.2 Z" stroke="#4a7d68" stroke-width="1.8" fill="none" stroke-linejoin="round"/></svg>
<svg style="left:373px;top:658px" width="16" height="25" viewBox="0 0 16 25"><circle cx="7.9" cy="4.8" r="2.7" stroke="#c8702a" stroke-width="1.5" fill="none"/><path d="M6 8.6 C3.5 8.8 1.6 10.6 1.6 13.2 V16.4 H4.6 L5.4 24.2 H10.4 L11.2 16.4 H14.2 V13.2 C14.2 10.6 12.3 8.8 9.8 8.6 Z" stroke="#c8702a" stroke-width="1.5" fill="none" stroke-linejoin="round"/></svg>
<div class="t" style="left:405px;top:656px;font-size:14px;color:#333">USA - Farmshop 3</div>
<div class="t" style="left:405px;top:678px;font-size:12px;color:#8a8a8a;transform:scaleX(.94);transform-origin:0 0">28 Dec 2024, 14:19</div>
<div class="a" style="left:748px;top:655px;width:67px;height:15px;border-radius:3px;background:#35397e"></div>
<div class="t" style="left:753.6px;top:658px;font-size:9.5px;color:#ffffff;font-weight:bold;transform:scaleX(0.9090);transform-origin:0 0;">FREE PROXY</div>
<div class="a" style="left:825px;top:656px;width:11px;height:11px;border-radius:50%;background:#e46a6a"></div>
<div class="t" style="left:841px;top:655px;font-size:14px;color:#333;transform:scaleX(.92);transform-origin:0 0">77.81.103.43</div>
<svg style="left:748px;top:678px" width="15" height="9" viewBox="0 0 15 9"><rect width="5" height="9" fill="#6aaa3a"/><rect x="5" width="5" height="9" fill="#f8f8f8"/><rect x="10" width="5" height="9" fill="#e05a60"/></svg>
<div class="t" style="left:769px;top:678px;font-size:11.5px;color:#8a8a8a;transform:scaleX(1.0482);transform-origin:0 0;">IT (Italy)</div>
<svg style="left:1176px;top:660px" width="22" height="22" viewBox="0 0 22 22"><circle cx="11" cy="11" r="9.2" stroke="#285a8c" stroke-width="2" fill="none"/><path d="M6.5 8.5 H15 M12.8 6.3 L15 8.5 L12.8 10.7 M15.5 13.5 H7 M9.2 11.3 L7 13.5 L9.2 15.7" stroke="#285a8c" stroke-width="1.6" fill="none" stroke-linecap="round" stroke-linejoin="round"/></svg>
<svg style="left:1204px;top:660px" width="22" height="22" viewBox="0 0 22 22"><circle cx="5" cy="4.5" r="2.6" stroke="#285a8c" stroke-width="1.7" fill="none"/><circle cx="5" cy="17.5" r="2.6" stroke="#285a8c" stroke-width="1.7" fill="none"/><circle cx="16" cy="17.5" r="2.6" stroke="#285a8c" stroke-width="1.7" fill="none"/><path d="M5 7.1 V14.9 M16 14.9 V8 C16 6 14.5 4.5 12.5 4.5 H10.5 M12.5 2 L10 4.5 L12.5 7" stroke="#285a8c" stroke-width="1.7" fill="none" stroke-linecap="round" stroke-linejoin="round"/></svg>
<svg style="left:1232px;top:660px" width="22" height="22" viewBox="0 0 22 22"><path d="M3.3 9 A8 8 0 0 1 18 7.5 M18.7 13 A8 8 0 0 1 4 14.5" stroke="#285a8c" stroke-width="1.9" fill="none" stroke-linecap="round"/><path d="M1.5 6.5 L3.3 10.2 L6.8 8.6 Z M20.5 15.5 L18.7 11.8 L15.2 13.4 Z" fill="#285a8c" stroke="#285a8c" stroke-width="1" stroke-linejoin="round"/></svg>
<svg style="left:1294px;top:662px" width="19" height="18" viewBox="0 0 19 18"><path d="M1.2 16.2 L1.8 12.3 L12.5 1.6 C13.3 0.8 14.5 0.8 15.3 1.6 C16.1 2.4 16.1 3.6 15.3 4.4 L4.6 15.1 Z" stroke="#8c8c8c" stroke-width="1.5" fill="none" stroke-linejoin="round"/><path d="M10 16.4 H18" stroke="#8c8c8c" stroke-width="1.5"/></svg>
<div class="a" style="left:237px;top:729px;width:16px;height:16px;border:2px solid #7a7a7a;border-radius:3px"></div>
<div class="a" style="left:294px;top:714px;width:46px;height:46px;border:2px solid #dadada;border-radius:50%"></div>
<svg style="left:309px;top:726px" width="20" height="22" viewBox="0 0 20 22"><path d="M3.2 2.2 C2.4 1.8 1.8 2.2 1.8 3 V19 C1.8 19.8 2.4 20.2 3.2 19.8 L17 11.8 C17.7 11.4 17.7 10.6 17 10.2 Z" stroke="#4a7d68" stroke-width="1.8" fill="none" stroke-linejoin="round"/></svg>
<svg style="left:373px;top:724px" width="16" height="25" viewBox="0 0 16 25"><circle cx="7.9" cy="4.8" r="2.7" stroke="#b03ac0" stroke-width="1.5" fill="none"/><path d="M6 8.6 C3.5 8.8 1.6 10.6 1.6 13.2 V16.4 H4.6 L5.4 24.2 H10.4 L11.2 16.4 H14.2 V13.2 C14.2 10.6 12.3 8.8 9.8 8.6 Z" stroke="#b03ac0" stroke-width="1.5" fill="none" stroke-linejoin="round"/></svg>
<div class="t" style="left:405px;top:722px;font-size:14px;color:#333">USA - Farmshop 6</div>
<div class="t" style="left:405px;top:744px;font-size:12px;color:#8a8a8a;transform:scaleX(.94);transform-origin:0 0">13 Dec 2024, 22:25</div>
<div class="a" style="left:748px;top:721px;width:67px;height:15px;border-radius:3px;background:#35397e"></div>
<div class="t" style="left:753.6px;top:724px;font-size:9.5px;color:#ffffff;font-weight:bold;transform:scaleX(0.9090);transform-origin:0 0;">FREE PROXY</div>
<div class="a" style="left:825px;top:722px;width:11px;height:11px;border-radius:50%;background:#e46a6a"></div>
<div class="t" style="left:841px;top:721px;font-size:14px;color:#333;transform:scaleX(.92);transform-origin:0 0">45.131.102.186</div>
<svg style="left:748px;top:744px" width="15" height="9" viewBox="0 0 15 9"><rect width="15" height="9" fill="#b84a55"/><rect y="3.6" width="15" height="1.8" fill="#f4eaea"/></svg>
<div class="t" style="left:769px;top:744px;font-size:11.5px;color:#8a8a8a;transform:scaleX(1.0004);transform-origin:0 0;">LV (Latvia) Riga, LV-1063</div>
<svg style="left:1176px;top:726px" width="22" height="22" viewBox="0 0 22 22"><circle cx="11" cy="11" r="9.2" stroke="#285a8c" stroke-width="2" fill="none"/><path d="M6.5 8.5 H15 M12.8 6.3 L15 8.5 L12.8 10.7 M15.5 13.5 H7 M9.2 11.3 L7 13.5 L9.2 15.7" stroke="#285a8c" stroke-width="1.6" fill="none" stroke-linecap="round" stroke-linejoin="round"/></svg>
<svg style="left:1204px;top:726px" width="22" height="22" viewBox="0 0 22 22"><circle cx="5" cy="4.5" r="2.6" stroke="#285a8c" stroke-width="1.7" fill="none"/><circle cx="5" cy="17.5" r="2.6" stroke="#285a8c" stroke-width="1.7" fill="none"/><circle cx="16" cy="17.5" r="2.6" stroke="#285a8c" stroke-width="1.7" fill="none"/><path d="M5 7.1 V14.9 M16 14.9 V8 C16 6 14.5 4.5 12.5 4.5 H10.5 M12.5 2 L10 4.5 L12.5 7" stroke="#285a8c" stroke-width="1.7" fill="none" stroke-linecap="round" stroke-linejoin="round"/></svg>
<svg style="left:1232px;top:726px" width="22" height="22" viewBox="0 0 22 22"><path d="M3.3 9 A8 8 0 0 1 18 7.5 M18.7 13 A8 8 0 0 1 4 14.5" stroke="#285a8c" stroke-width="1.9" fill="none" stroke-linecap="round"/><path d="M1.5 6.5 L3.3 10.2 L6.8 8.6 Z M20.5 15.5 L18.7 11.8 L15.2 13.4 Z" fill="#285a8c" stroke="#285a8c" stroke-width="1" stroke-linejoin="round"/></svg>
<svg style="left:1294px;top:728px" width="19" height="18" viewBox="0 0 19 18"><path d="M1.2 16.2 L1.8 12.3 L12.5 1.6 C13.3 0.8 14.5 0.8 15.3 1.6 C16.1 2.4 16.1 3.6 15.3 4.4 L4.6 15.1 Z" stroke="#8c8c8c" stroke-width="1.5" fill="none" stroke-linejoin="round"/><path d="M10 16.4 H18" stroke="#8c8c8c" stroke-width="1.5"/></svg>
<div class="a" style="left:237px;top:795px;width:16px;height:16px;border:2px solid #7a7a7a;border-radius:3px"></div>
<div class="a" style="left:294px;top:780px;width:46px;height:46px;border:2px solid #dadada;border-radius:50%"></div>
<svg style="left:309px;top:792px" width="20" height="22" viewBox="0 0 20 22"><path d="M3.2 2.2 C2.4 1.8 1.8 2.2 1.8 3 V19 C1.8 19.8 2.4 20.2 3.2 19.8 L17 11.8 C17.7 11.4 17.7 10.6 17 10.2 Z" stroke="#8c8c8c" stroke-width="1.8" fill="none" stroke-linejoin="round"/></svg>
<svg style="left:373px;top:790px" width="16" height="25" viewBox="0 0 16 25"><circle cx="7.9" cy="4.8" r="2.7" stroke="#a03040" stroke-width="1.5" fill="none"/><path d="M6 8.6 C3.5 8.8 1.6 10.6 1.6 13.2 V16.4 H4.6 L5.4 24.2 H10.4 L11.2 16.4 H14.2 V13.2 C14.2 10.6 12.3 8.8 9.8 8.6 Z" stroke="#a03040" stroke-width="1.5" fill="none" stroke-linejoin="round"/></svg>
<div class="t" style="left:405px;top:788px;font-size:14px;color:#333">Desktop preset 5</div>
<div class="t" style="left:405px;top:810px;font-size:12px;color:#8a8a8a;transform:scaleX(.94);transform-origin:0 0">13 Dec 2024, 22:25</div>
<div class="a" style="left:748px;top:787px;width:50px;height:15px;border-radius:3px;background:#8a8a8a"></div>
<div class="t" style="left:753.6px;top:790px;font-size:9.5px;color:#ffffff;font-weight:bold;transform:scaleX(0.9408);transform-origin:0 0;">NOT SET</div>
<svg style="left:748px;top:809px" width="15" height="10" viewBox="0 0 15 10"><rect x="0.6" y="0.6" width="13.8" height="8.8" stroke="#555" stroke-width="1.2" fill="none"/><circle cx="7.5" cy="5" r="2.2" fill="#555"/><path d="M7.5 3.8 V6.2 M6.3 5 H8.7" stroke="#fff" stroke-width=".7"/></svg>
<div class="t" style="left:769px;top:810px;font-size:11.5px;color:#8a8a8a;transform:scaleX(1.0673);transform-origin:0 0;">No geolocation data yet</div>
<svg style="left:1176px;top:792px" width="22" height="22" viewBox="0 0 22 22"><circle cx="11" cy="11" r="9.2" stroke="#c9d8ea" stroke-width="2" fill="none"/><path d="M6.5 8.5 H15 M12.8 6.3 L15 8.5 L12.8 10.7 M15.5 13.5 H7 M9.2 11.3 L7 13.5 L9.2 15.7" stroke="#c9d8ea" stroke-width="1.6" fill="none" stroke-linecap="round" stroke-linejoin="round"/></svg>
<svg style="left:1204px;top:792px" width="22" height="22" viewBox="0 0 22 22"><circle cx="5" cy="4.5" r="2.6" stroke="#285a8c" stroke-width="1.7" fill="none"/><circle cx="5" cy="17.5" r="2.6" stroke="#285a8c" stroke-width="1.7" fill="none"/><circle cx="16" cy="17.5" r="2.6" stroke="#285a8c" stroke-width="1.7" fill="none"/><path d="M5 7.1 V14.9 M16 14.9 V8 C16 6 14.5 4.5 12.5 4.5 H10.5 M12.5 2 L10 4.5 L12.5 7" stroke="#285a8c" stroke-width="1.7" fill="none" stroke-linecap="round" stroke-linejoin="round"/></svg>
<svg style="left:1232px;top:792px" width="22" height="22" viewBox="0 0 22 22"><path d="M3.3 9 A8 8 0 0 1 18 7.5 M18.7 13 A8 8 0 0 1 4 14.5" stroke="#c9d8ea" stroke-width="1.9" fill="none" stroke-linecap="round"/><path d="M1.5 6.5 L3.3 10.2 L6.8 8.6 Z M20.5 15.5 L18.7 11.8 L15.2 13.4 Z" fill="#c9d8ea" stroke="#c9d8ea" stroke-width="1" stroke-linejoin="round"/></svg>
<svg style="left:1294px;top:794px" width="19" height="18" viewBox="0 0 19 18"><path d="M1.2 16.2 L1.8 12.3 L12.5 1.6 C13.3 0.8 14.5 0.8 15.3 1.6 C16.1 2.4 16.1 3.6 15.3 4.4 L4.6 15.1 Z" stroke="#8c8c8c" stroke-width="1.5" fill="none" stroke-linejoin="round"/><path d="M10 16.4 H18" stroke="#8c8c8c" stroke-width="1.5"/></svg>
<div class="a" style="left:237px;top:861px;width:16px;height:16px;border:2px solid #7a7a7a;border-radius:3px"></div>
<div class="a" style="left:294px;top:846px;width:46px;height:46px;border:2px solid #dadada;border-radius:50%"></div>
<svg style="left:309px;top:858px" width="20" height="22" viewBox="0 0 20 22"><path d="M3.2 2.2 C2.4 1.8 1.8 2.2 1.8 3 V19 C1.8 19.8 2.4 20.2 3.2 19.8 L17 11.8 C17.7 11.4 17.7 10.6 17 10.2 Z" stroke="#4a7d68" stroke-width="1.8" fill="none" stroke-linejoin="round"/></svg>
<svg style="left:369px;top:857px" width="24" height="24" viewBox="0 0 24 24"><rect x="0" y="0" width="24" height="24" rx="3" fill="#33569a"/><path d="M12.8 23.5 V13.5 H9.6 V10.2 H12.8 V7.8 C12.8 5 14.3 3.8 16.8 3.8 C17.7 3.8 18.6 3.9 18.6 3.9 V6.8 H17.3 C16 6.8 15.8 7.4 15.8 8.2 V10.2 H18.4 L18 13.5 H15.8 V23.5 Z" fill="#fff"/></svg>
<div class="t" style="left:405px;top:854px;font-size:14px;color:#333">Тестовая сессия</div>
<div class="t" style="left:405px;top:876px;font-size:12px;color:#8a8a8a;transform:scaleX(.94);transform-origin:0 0">13 Dec 2024, 22:25</div>
<div class="a" style="left:748px;top:853px;width:67px;height:15px;border-radius:3px;background:#35397e"></div>
<div class="t" style="left:753.6px;top:856px;font-size:9.5px;color:#ffffff;font-weight:bold;transform:scaleX(0.9090);transform-origin:0 0;">FREE PROXY</div>
<div class="a" style="left:825px;top:854px;width:11px;height:11px;border-radius:50%;background:#e46a6a"></div>
<div class="t" style="left:841px;top:853px;font-size:14px;color:#333;transform:scaleX(.92);transform-origin:0 0">212.42.203.130</div>
<svg style="left:748px;top:876px" width="15" height="9" viewBox="0 0 15 9"><rect x="0" y="0.00" width="15" height="1.29" fill="#e06a75"/><rect x="0" y="1.29" width="15" height="1.29" fill="#fbe3e6"/><rect x="0" y="2.57" width="15" height="1.29" fill="#e06a75"/><rect x="0" y="3.86" width="15" height="1.29" fill="#fbe3e6"/><rect x="0" y="5.14" width="15" height="1.29" fill="#e06a75"/><rect x="0" y="6.43" width="15" height="1.29" fill="#fbe3e6"/><rect x="0" y="7.71" width="15" height="1.29" fill="#e06a75"/><rect x="0" y="0" width="6.5" height="5" fill="#5a5f9a"/></svg>
<div class="t" style="left:769px;top:876px;font-size:11.5px;color:#8a8a8a;transform:scaleX(1.0201);transform-origin:0 0;">US (United States) Los Angeles, CA 90060</div>
<svg style="left:1176px;top:858px" width="22" height="22" viewBox="0 0 22 22"><circle cx="11" cy="11" r="9.2" stroke="#285a8c" stroke-width="2" fill="none"/><path d="M6.5 8.5 H15 M12.8 6.3 L15 8.5 L12.8 10.7 M15.5 13.5 H7 M9.2 11.3 L7 13.5 L9.2 15.7" stroke="#285a8c" stroke-width="1.6" fill="none" stroke-linecap="round" stroke-linejoin="round"/></svg>
<svg style="left:1204px;top:858px" width="22" height="22" viewBox="0 0 22 22"><circle cx="5" cy="4.5" r="2.6" stroke="#285a8c" stroke-width="1.7" fill="none"/><circle cx="5" cy="17.5" r="2.6" stroke="#285a8c" stroke-width="1.7" fill="none"/><circle cx="16" cy="17.5" r="2.6" stroke="#285a8c" stroke-width="1.7" fill="none"/><path d="M5 7.1 V14.9 M16 14.9 V8 C16 6 14.5 4.5 12.5 4.5 H10.5 M12.5 2 L10 4.5 L12.5 7" stroke="#285a8c" stroke-width="1.7" fill="none" stroke-linecap="round" stroke-linejoin="round"/></svg>
<svg style="left:1232px;top:858px" width="22" height="22" viewBox="0 0 22 22"><path d="M3.3 9 A8 8 0 0 1 18 7.5 M18.7 13 A8 8 0 0 1 4 14.5" stroke="#285a8c" stroke-width="1.9" fill="none" stroke-linecap="round"/><path d="M1.5 6.5 L3.3 10.2 L6.8 8.6 Z M20.5 15.5 L18.7 11.8 L15.2 13.4 Z" fill="#285a8c" stroke="#285a8c" stroke-width="1" stroke-linejoin="round"/></svg>
<svg style="left:1294px;top:860px" width="19" height="18" viewBox="0 0 19 18"><path d="M1.2 16.2 L1.8 12.3 L12.5 1.6 C13.3 0.8 14.5 0.8 15.3 1.6 C16.1 2.4 16.1 3.6 15.3 4.4 L4.6 15.1 Z" stroke="#8c8c8c" stroke-width="1.5" fill="none" stroke-linejoin="round"/><path d="M10 16.4 H18" stroke="#8c8c8c" stroke-width="1.5"/></svg>
<div class="a" style="left:237px;top:927px;width:16px;height:16px;border:2px solid #7a7a7a;border-radius:3px"></div>
<div class="a" style="left:294px;top:912px;width:46px;height:46px;border:2px solid #dadada;border-radius:50%"></div>
<svg style="left:309px;top:924px" width="20" height="22" viewBox="0 0 20 22"><path d="M3.2 2.2 C2.4 1.8 1.8 2.2 1.8 3 V19 C1.8 19.8 2.4 20.2 3.2 19.8 L17 11.8 C17.7 11.4 17.7 10.6 17 10.2 Z" stroke="#8c8c8c" stroke-width="1.8" fill="none" stroke-linejoin="round"/></svg>
<svg style="left:369px;top:923px" width="24" height="24" viewBox="0 0 24 24"><rect x="0" y="0" width="24" height="24" rx="3" fill="#33569a"/><path d="M12.8 23.5 V13.5 H9.6 V10.2 H12.8 V7.8 C12.8 5 14.3 3.8 16.8 3.8 C17.7 3.8 18.6 3.9 18.6 3.9 V6.8 H17.3 C16 6.8 15.8 7.4 15.8 8.2 V10.2 H18.4 L18 13.5 H15.8 V23.5 Z" fill="#fff"/></svg>
<div class="t" style="left:405px;top:920px;font-size:14px;color:#333">D2 - Farmshop 2</div>
<div class="t" style="left:405px;top:942px;font-size:12px;color:#8a8a8a;transform:scaleX(.94);transform-origin:0 0">13 Dec 2024, 22:24</div>
<div class="a" style="left:748px;top:919px;width:50px;height:15px;border-radius:3px;background:#8a8a8a"></div>
<div class="t" style="left:753.6px;top:922px;font-size:9.5px;color:#ffffff;font-weight:bold;transform:scaleX(0.9408);transform-origin:0 0;">NOT SET</div>
<svg style="left:748px;top:941px" width="15" height="10" viewBox="0 0 15 10"><rect x="0.6" y="0.6" width="13.8" height="8.8" stroke="#555" stroke-width="1.2" fill="none"/><circle cx="7.5" cy="5" r="2.2" fill="#555"/><path d="M7.5 3.8 V6.2 M6.3 5 H8.7" stroke="#fff" stroke-width=".7"/></svg>
<div class="t" style="left:769px;top:942px;font-size:11.5px;color:#8a8a8a;transform:scaleX(1.0673);transform-origin:0 0;">No geolocation data yet</div>
<svg style="left:1176px;top:924px" width="22" height="22" viewBox="0 0 22 22"><circle cx="11" cy="11" r="9.2" stroke="#c9d8ea" stroke-width="2" fill="none"/><path d="M6.5 8.5 H15 M12.8 6.3 L15 8.5 L12.8 10.7 M15.5 13.5 H7 M9.2 11.3 L7 13.5 L9.2 15.7" stroke="#c9d8ea" stroke-width="1.6" fill="none" stroke-linecap="round" stroke-linejoin="round"/></svg>
<svg style="left:1204px;top:924px" width="22" height="22" viewBox="0 0 22 22"><circle cx="5" cy="4.5" r="2.6" stroke="#285a8c" stroke-width="1.7" fill="none"/><circle cx="5" cy="17.5" r="2.6" stroke="#285a8c" stroke-width="1.7" fill="none"/><circle cx="16" cy="17.5" r="2.6" stroke="#285a8c" stroke-width="1.7" fill="none"/><path d="M5 7.1 V14.9 M16 14.9 V8 C16 6 14.5 4.5 12.5 4.5 H10.5 M12.5 2 L10 4.5 L12.5 7" stroke="#285a8c" stroke-width="1.7" fill="none" stroke-linecap="round" stroke-linejoin="round"/></svg>
<svg style="left:1232px;top:924px" width="22" height="22" viewBox="0 0 22 22"><path d="M3.3 9 A8 8 0 0 1 18 7.5 M18.7 13 A8 8 0 0 1 4 14.5" stroke="#c9d8ea" stroke-width="1.9" fill="none" stroke-linecap="round"/><path d="M1.5 6.5 L3.3 10.2 L6.8 8.6 Z M20.5 15.5 L18.7 11.8 L15.2 13.4 Z" fill="#c9d8ea" stroke="#c9d8ea" stroke-width="1" stroke-linejoin="round"/></svg>
<svg style="left:1294px;top:926px" width="19" height="18" viewBox="0 0 19 18"><path d="M1.2 16.2 L1.8 12.3 L12.5 1.6 C13.3 0.8 14.5 0.8 15.3 1.6 C16.1 2.4 16.1 3.6 15.3 4.4 L4.6 15.1 Z" stroke="#8c8c8c" stroke-width="1.5" fill="none" stroke-linejoin="round"/><path d="M10 16.4 H18" stroke="#8c8c8c" stroke-width="1.5"/></svg>
<div class="a" style="left:207px;top:308px;width:2px;height:132px;background:#1a4f8c"></div>
<div class="a" style="left:1914px;top:242px;width:6px;height:546px;background:#1560b8;border-radius:3px 0 0 3px"></div>
<div class="a" style="left:0;top:977px;width:1919px;height:64px;background:#fff;box-shadow:0 -1px 2px rgba(0,0,0,.04)"></div>
<svg style="left:236px;top:1001px" width="17" height="17" viewBox="0 0 17 17"><rect width="17" height="17" rx="3.5" fill="#1a4f8c"/><rect x="4" y="7.6" width="9" height="2" fill="#fff"/></svg>
<div class="t" style="left:261px;top:1002px;font-size:13.5px;color:#8a8a8a;transform:scaleX(1.0521);transform-origin:0 0;">2 selected sessions</div>
<div class="a" style="left:874px;top:992px;width:97px;height:36px;border:1.5px solid #d4d8de;border-radius:5px;background:#fff"></div>
<div class="a" style="left:981px;top:992px;width:89px;height:36px;border:1.5px solid #d4d8de;border-radius:5px;background:#fff"></div>
<div class="a" style="left:1081px;top:992px;width:144px;height:36px;border:1.5px solid #d4d8de;border-radius:5px;background:#fff"></div>
<div class="a" style="left:1236px;top:992px;width:172px;height:36px;border:1.5px solid #d4d8de;border-radius:5px;background:#fff"></div>
<div class="a" style="left:1420px;top:992px;width:125px;height:36px;border:1.5px solid #d4d8de;border-radius:5px;background:#fff"></div>
<div class="a" style="left:1557px;top:992px;width:152px;height:36px;border:1.5px solid #a0a4aa;border-radius:5px;background:#fff"></div>
<svg style="left:891px;top:1001px" width="17" height="19" viewBox="0 0 17 19"><path d="M1.5 1.5 L15 9.5 L1.5 17.5 Z" stroke="#4a8a6c" stroke-width="1.6" fill="none" stroke-linejoin="round"/></svg>
<div class="t" style="left:916px;top:1003px;font-size:14px;color:#333;-webkit-text-stroke:.3px #333;transform:scaleX(0.8897);transform-origin:0 0;">START</div>
<div class="a" style="left:997px;top:1002px;width:16px;height:16px;border:1.5px solid #e8a0a8;border-radius:2px"></div>
<div class="t" style="left:1023px;top:1003px;font-size:14px;color:#9a9a9a;-webkit-text-stroke:.3px #9a9a9a;transform:scaleX(0.8766);transform-origin:0 0;">STOP</div>
<svg style="left:1094px;top:1000px" width="21" height="21" viewBox="0 0 22 22"><circle cx="11" cy="11" r="9.5" stroke="#2a5a8a" stroke-width="1.6" fill="none"/><path d="M6.5 8.5 H15 M12.8 6.3 L15 8.5 L12.8 10.7 M15.5 13.5 H7 M9.2 11.3 L7 13.5 L9.2 15.7" stroke="#2a5a8a" stroke-width="1.6" fill="none" stroke-linecap="round" stroke-linejoin="round"/></svg>
<div class="t" style="left:1123px;top:1003px;font-size:14px;color:#333;-webkit-text-stroke:.3px #333;transform:scaleX(0.8658);transform-origin:0 0;">CHECK PROXY</div>
<svg style="left:1250px;top:1001px" width="19" height="19" viewBox="0 0 19 19"><circle cx="9.5" cy="9.5" r="8.3" stroke="#2a5a8a" stroke-width="1.5" fill="none"/><path d="M9.5 14 V5.5 M6 9 L9.5 5.5 L13 9" stroke="#2a5a8a" stroke-width="1.5" fill="none" stroke-linecap="round" stroke-linejoin="round"/></svg>
<div class="t" style="left:1279px;top:1003px;font-size:14px;color:#333;-webkit-text-stroke:.3px #333;transform:scaleX(0.8958);transform-origin:0 0;">MODIFY SESSIONS</div>
<svg style="left:1432px;top:1000px" width="22" height="21" viewBox="0 0 22 22"><circle cx="5" cy="4.5" r="2.6" stroke="#2a5a8a" stroke-width="1.6" fill="none"/><circle cx="5" cy="17.5" r="2.6" stroke="#2a5a8a" stroke-width="1.6" fill="none"/><circle cx="16" cy="17.5" r="2.6" stroke="#2a5a8a" stroke-width="1.6" fill="none"/><path d="M5 7.1 V14.9 M16 14.9 V8 C16 6 14.5 4.5 12.5 4.5 H10.5 M12.5 2 L10 4.5 L12.5 7" stroke="#2a5a8a" stroke-width="1.6" fill="none" stroke-linecap="round" stroke-linejoin="round"/></svg>
<div class="t" style="left:1461px;top:1003px;font-size:14px;color:#333;-webkit-text-stroke:.3px #333;transform:scaleX(0.8724);transform-origin:0 0;">SET PROXY</div>
<div class="t" style="left:1573px;top:1002px;font-size:15px;color:#2e2e2e;-webkit-text-stroke:.3px #2e2e2e;transform:scaleX(1.1208);transform-origin:0 0;">More actions</div>
<svg style="left:1682px;top:1006px" width="9" height="7" viewBox="0 0 9 7"><path d="M0.5 6.5 H8.5 L4.5 0.5 Z" fill="#222"/></svg>
<div class="a" style="left:1458px;top:547px;width:253px;height:432px;background:#fff;border-radius:4px;box-shadow:0 0 6px rgba(0,0,0,.12)"></div>
<div class="t" style="left:1472px;top:565px;font-size:14px;color:#484848;-webkit-text-stroke:.15px #484848">Export cookies</div>
<div class="t" style="left:1472px;top:601px;font-size:14px;color:#484848;-webkit-text-stroke:.15px #484848">Remove all data</div>
<div class="a" style="left:1462px;top:627px;width:244px;height:2px;background:#eceef2"></div>
<div class="t" style="left:1472px;top:644px;font-size:14px;color:#484848;-webkit-text-stroke:.15px #484848">Change IP</div>
<div class="t" style="left:1472px;top:680px;font-size:14px;color:#b0b0b0;-webkit-text-stroke:.15px #b0b0b0">IPQS check</div>
<div class="a" style="left:1462px;top:706px;width:244px;height:2px;background:#eceef2"></div>
<div class="t" style="left:1472px;top:723px;font-size:14px;color:#484848;-webkit-text-stroke:.15px #484848">Warm up</div>
<div class="t" style="left:1472px;top:759px;font-size:14px;color:#484848;-webkit-text-stroke:.15px #484848">Move to desktop</div>
<div class="t" style="left:1472px;top:795px;font-size:14px;color:#484848;-webkit-text-stroke:.15px #484848">Clone</div>
<div class="t" style="left:1472px;top:831px;font-size:14px;color:#484848;-webkit-text-stroke:.15px #484848">Share</div>
<div class="t" style="left:1472px;top:867px;font-size:14px;color:#484848;-webkit-text-stroke:.15px #484848">Send to Nooklz</div>
<div class="a" style="left:1462px;top:893px;width:244px;height:2px;background:#eceef2"></div>
<div class="t" style="left:1472px;top:910px;font-size:14px;color:#484848;-webkit-text-stroke:.15px #484848">Pin/Unpin</div>
<div class="t" style="left:1472px;top:946px;font-size:14px;color:#484848;-webkit-text-stroke:.15px #484848">Move to trash</div>
<svg style="left:1678px;top:563px" width="17" height="16" viewBox="0 0 17 16"><path d="M1 5 C1 2.5 3 1 5 1 H12 C14 1 16 2.5 16 5 V15 H13 M4 15 H1 V5 H16 M8.5 1 V5 M8.5 14.5 V8 M6 10.5 L8.5 8 L11 10.5" stroke="#2f5f90" stroke-width="1.4" fill="none" stroke-linejoin="round" stroke-linecap="round"/></svg>
<svg style="left:1678px;top:599px" width="18" height="17" viewBox="0 0 18 17"><ellipse cx="7" cy="3.5" rx="6" ry="2.5" stroke="#2f5f90" stroke-width="1.4" fill="none"/><path d="M1 3.5 V13 C1 14.4 3.7 15.5 7 15.5 M13 3.5 V8.5 M1 8.3 C1 9.7 3.7 10.8 7 10.8 H9 M11.5 11 L16.5 16 M16.5 11 L11.5 16" stroke="#2f5f90" stroke-width="1.4" fill="none" stroke-linecap="round"/></svg>
<svg style="left:1676px;top:639px" width="19" height="19" viewBox="0 0 22 22"><path d="M3.3 9 A8 8 0 0 1 18 7.5 M18.7 13 A8 8 0 0 1 4 14.5" stroke="#2f5f90" stroke-width="1.5" fill="none" stroke-linecap="round"/><path d="M1.5 6.5 L3.3 10.2 L6.8 8.6 Z M20.5 15.5 L18.7 11.8 L15.2 13.4 Z" fill="#2f5f90" stroke="#2f5f90" stroke-width="1" stroke-linejoin="round"/></svg>
<svg style="left:1677px;top:677px" width="18" height="18" viewBox="0 0 22 22"><circle cx="11" cy="11" r="9.2" stroke="#c8d6e8" stroke-width="2" fill="none"/><path d="M6.5 8.5 H15 M12.8 6.3 L15 8.5 L12.8 10.7 M15.5 13.5 H7 M9.2 11.3 L7 13.5 L9.2 15.7" stroke="#c8d6e8" stroke-width="1.6" fill="none" stroke-linecap="round" stroke-linejoin="round"/></svg>
<svg style="left:1679px;top:720px" width="16" height="18" viewBox="0 0 16 18"><path d="M8 17 C4 17 1.5 14.5 1.5 11 C1.5 8.5 3 6.5 4.5 5.5 C4.5 7 5 8.5 6.5 9 C6 5.5 8 2.5 10 1 C10 4 14.5 6.5 14.5 11 C14.5 14.5 12 17 8 17 Z" stroke="#2f5f90" stroke-width="1.4" fill="none" stroke-linejoin="round"/></svg>
<svg style="left:1678px;top:757px" width="17" height="16" viewBox="0 0 16 15"><rect x="4.5" y="0.7" width="10.5" height="10" stroke="#2f5f90" stroke-width="1.3" fill="none"/><rect x="0.7" y="3.8" width="10.5" height="10.5" stroke="#2f5f90" stroke-width="1.3" fill="#fff"/><circle cx="6" cy="7.5" r="1.8" stroke="#2f5f90" stroke-width="1.2" fill="none"/><path d="M2.5 14 C3 11 9 11 9.5 14" stroke="#2f5f90" stroke-width="1.2" fill="none"/></svg>
<svg style="left:1678px;top:793px" width="17" height="16" viewBox="0 0 17 16"><rect x="0.7" y="0.7" width="13" height="12.5" rx="1.5" stroke="#2f5f90" stroke-width="1.4" fill="none"/><path d="M3.5 15.3 H14.5 C15.5 15.3 16.3 14.5 16.3 13.5 V3.5" stroke="#2f5f90" stroke-width="1.4" fill="none"/></svg>
<svg style="left:1678px;top:829px" width="17" height="16" viewBox="0 0 17 16"><path d="M16 1 L1 6.5 L6.5 9 L9 15 Z M16 1 L6.5 9" stroke="#2f5f90" stroke-width="1.4" fill="none" stroke-linejoin="round"/></svg>
<svg style="left:1679px;top:865px" width="16" height="16" viewBox="0 0 16 16"><path d="M1.5 15 V8 C1.5 4 4.5 1 8 1 C11.5 1 14.5 4 14.5 8 V15 H11 L9 11 L5.5 15 H4 L4 10 C4 8 5 6.5 8 6.5" stroke="#2f5f90" stroke-width="1.4" fill="none" stroke-linejoin="round"/></svg>
<svg style="left:1679px;top:907px" width="17" height="17" viewBox="0 0 17 17"><path d="M10 1 L16 7 L13.5 7.8 L10.5 10.8 L10.2 14 L3 6.8 L6.2 6.5 L9.2 3.5 Z M6.5 10.5 L1 16" stroke="#2f5f90" stroke-width="1.3" fill="none" stroke-linejoin="round" stroke-linecap="round"/></svg>
<svg style="left:1680px;top:943px" width="15" height="17" viewBox="0 0 15 17"><path d="M1 4 H14 M5 4 V1.5 H10 V4 M2.3 4 L3.2 16 H11.8 L12.7 4 M6 7.5 V13 M9 7.5 V13" stroke="#e0a0a8" stroke-width="1.4" fill="none"/></svg>
<div class="a" style="left:175px;top:291px;width:120px;height:168px;border:3px solid #0c0ca6"></div>
<div class="a" style="left:1449px;top:537px;width:274px;height:442px;border:3px solid #0c0ca6"></div>
<div class="a" style="left:191px;top:976px;width:1533px;height:64px;border:3px solid #0c0ca6"></div>
<svg style="left:0;top:0" width="1919" height="1041" viewBox="0 0 1919 1041"><path d="M294 451.5 L1367 972" stroke="#0c0ca6" stroke-width="3"/><path d="M1376.5 976.5 L1360.5 974 L1366.5 965.5 Z" fill="#0c0ca6" stroke="#0c0ca6" stroke-width="1.5" stroke-linejoin="round"/></svg></body></html>
